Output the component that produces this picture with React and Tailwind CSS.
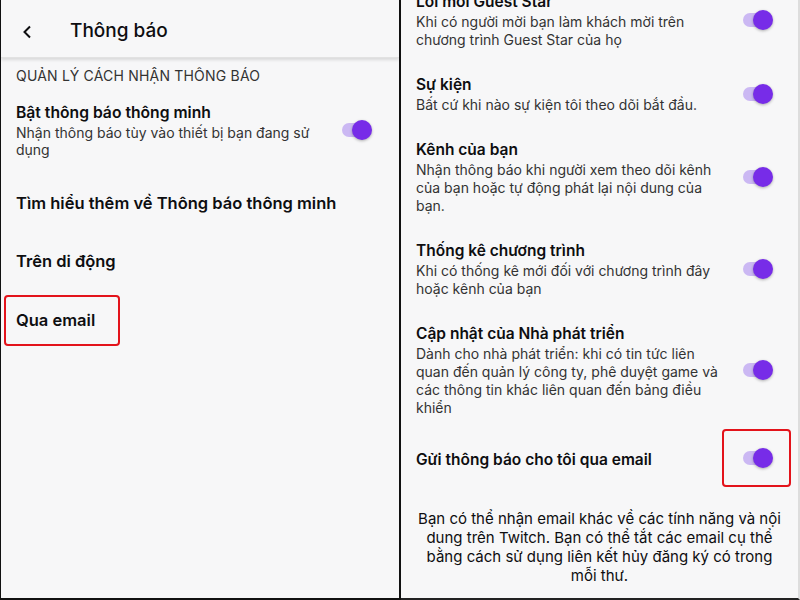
import React from 'react';

const font = { fontFamily: 'Inter, "Noto Sans", sans-serif' };

// Twitch-style switch, always on
const Toggle = () => (
    <div className="relative w-[30px] h-[20px] shrink-0">
        <div className="absolute left-0 top-[3px] w-[28px] h-[14px] rounded-full bg-[#cbb8f3]" />
        <div className="absolute right-0 top-0 w-[20px] h-[20px] rounded-full bg-[#772ce8] shadow-[0_1px_3px_rgba(0,0,0,0.3)]" />
    </div>
);

const SettingRow = ({ title, desc }) => (
    <div className="flex items-center justify-between pl-[15px] pr-[25px]">
        <div className="w-[312px]">
            <div className="text-[15.5px] leading-[22px] font-semibold text-[#0e0e10]">{title}</div>
            {desc && <div className="text-[14px] leading-[18px] text-[#333]">{desc}</div>}
        </div>
        <Toggle />
    </div>
);

const rightItems = [
    { title: 'Lời mời Guest Star', desc: 'Khi có người mời bạn làm khách mời trên chương trình Guest Star của họ' },
    { title: 'Sự kiện', desc: 'Bất cứ khi nào sự kiện tôi theo dõi bắt đầu.' },
    { title: 'Kênh của bạn', desc: 'Nhận thông báo khi người xem theo dõi kênh của bạn hoặc tự động phát lại nội dung của bạn.' },
    { title: 'Thống kê chương trình', desc: 'Khi có thống kê mới đối với chương trình đây hoặc kênh của bạn' },
    { title: 'Cập nhật của Nhà phát triển', desc: 'Dành cho nhà phát triển: khi có tin tức liên quan đến quản lý công ty, phê duyệt game và các thông tin khác liên quan đến bảng điều khiển' },
];

export default function App() {
    return (
        <div className="w-[800px] h-[600px] flex overflow-hidden bg-[#f7f7f8]" style={font}>
            {/* left screen: notification settings */}
            <div className="w-[401px] h-full shrink-0 flex flex-col border-l border-b-2 border-r-2 border-[#111] bg-[#f7f7f8]">
                <header className="h-[58px] shrink-0 flex items-center pt-[6px] bg-[#f7f7f8] shadow-[0_2px_3px_rgba(0,0,0,0.12)] border-b border-[#e2e2e2]">
                    <svg width="12" height="14" viewBox="0 0 12 14" className="ml-[21px]">
                        <path d="M8 1.5 L2.5 7 L8 12.5" fill="none" stroke="#0e0e10" strokeWidth="2" />
                    </svg>
                    <h1 className="ml-[36px] text-[19px] font-medium text-[#0e0e10]">Thông báo</h1>
                </header>

                <div className="pl-[15px] mt-[8px] text-[14px] leading-[20px] text-[#333] tracking-[0.2px]">QUẢN LÝ CÁCH NHẬN THÔNG BÁO</div>

                <div className="flex items-center justify-between pl-[15px] pr-[27px] mt-[16px]">
                    <div className="w-[310px]">
                        <div className="text-[15.7px] leading-[22px] font-semibold text-[#0e0e10]">Bật thông báo thông minh</div>
                        <div className="text-[14px] leading-[17px] text-[#333]">Nhận thông báo tùy vào thiết bị bạn đang sử dụng</div>
                    </div>
                    <Toggle />
                </div>

                <div className="pl-[15px] mt-[16px] h-[58px] flex items-center text-[16.5px] font-semibold text-[#0e0e10]">Tìm hiểu thêm về Thông báo thông minh</div>
                <div className="pl-[15px] h-[58px] flex items-center text-[16.5px] font-semibold text-[#0e0e10]">Trên di động</div>
                <div className="ml-[3px] mt-[5px] w-[116px] h-[51px] flex items-center pl-[10px] border-2 border-[#e3131b] rounded-[4px] text-[16.5px] font-semibold text-[#0e0e10]">Qua email</div>
            </div>

            {/* right screen: email notification list */}
            <div className="flex-1 h-full flex flex-col border-b-2 border-r-2 border-b-[#222] border-r-[#ddd]">
                <div className="-mt-[9px] flex flex-col gap-[25px]">
                    {rightItems.map((item) => (
                        <SettingRow key={item.title} title={item.title} desc={item.desc} />
                    ))}
                </div>

                <div className="mt-[12px] flex items-center justify-between pl-[15px] pr-[7px]">
                    <div className="pt-[3px] text-[15.5px] leading-[22px] font-semibold text-[#0e0e10]">Gửi thông báo cho tôi qua email</div>
                    <div className="w-[69px] h-[58px] flex items-center justify-end pr-[16px] border-2 border-[#e3131b] rounded-[4px]">
                        <Toggle />
                    </div>
                </div>

                <p className="mt-[22px] px-[12px] text-center text-[15px] leading-[19px] text-[#0e0e10]">
                    Bạn có thể nhận email khác về các tính năng và nội dung trên Twitch. Bạn có thể tắt các email cụ thể bằng cách sử dụng liên kết hủy đăng ký có trong mỗi thư.
                </p>
            </div>
        </div>
    );
}
